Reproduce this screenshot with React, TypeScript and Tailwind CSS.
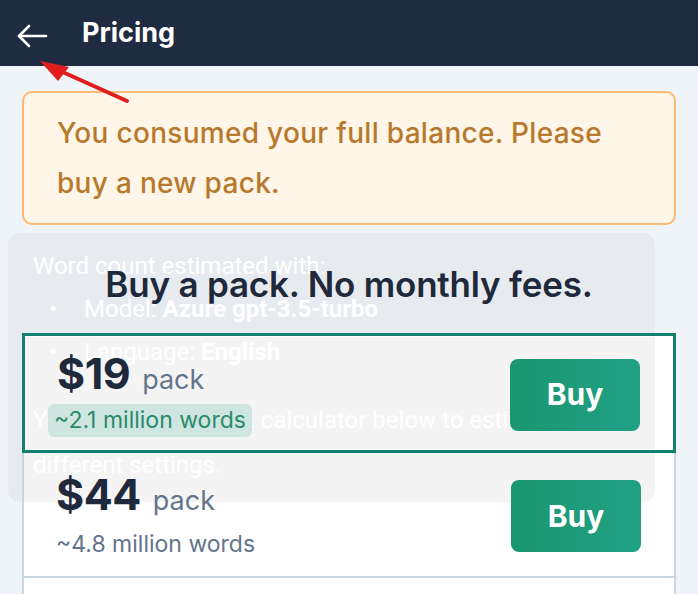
import React from 'react';

type Pack = {
  price: string;
  words: string;
  selected?: boolean;
};

const packs: Pack[] = [
  { price: '$19', words: '~2.1 million words', selected: true },
  { price: '$44', words: '~4.8 million words' },
  { price: '$99', words: '~11 million words' },
];

const BackArrow = () => (
  <svg width="32" height="24" viewBox="0 0 32 24" fill="none" className="mt-[5px]">
    <path d="M30 12H3" stroke="white" strokeWidth="2.6" strokeLinecap="round" />
    <path d="M13 2L3 12L13 22" stroke="white" strokeWidth="2.6" strokeLinecap="round" strokeLinejoin="round" />
  </svg>
);

// red annotation arrow pointing at the back button
const Annotation = () => (
  <svg className="absolute left-0 top-0 pointer-events-none z-30" width="140" height="110" viewBox="0 0 140 110">
    <path d="M127 101L56 69" stroke="#e11d1d" strokeWidth="4" strokeLinecap="round" />
    <path d="M40 61L69 67L58 81Z" fill="#e11d1d" />
  </svg>
);

const PackRow = ({ pack }: { pack: Pack }) => (
  <div
    className={`relative z-20 flex items-center justify-between pl-[32px] ${
      pack.selected
        ? 'h-[120px] -mx-[2px] border-[3px] border-[#11806e] pr-[33px] shadow-[inset_0_0_0_1px_white]'
        : 'h-[125px] border-b-2 border-[#cbd5e1] pr-[33px]'
    }`}
  >
    <div className="flex flex-col">
      <div className="flex items-baseline leading-[46px]">
        <span className="text-[43px] font-bold tracking-[-0.5px] text-[#1e293b]">{pack.price}</span>
        <span className="ml-[12px] text-[27px] text-[#64748b]">pack</span>
      </div>
      {pack.selected ? (
        <span className="mt-[1px] -ml-[9px] self-start rounded-[6px] bg-[#cfe6e0] px-[6px] text-[23px] leading-[33px] text-[#2b8a6c]">
          {pack.words}
        </span>
      ) : (
        <span className="mt-[5px] text-[23px] leading-[30px] text-[#64748b]">{pack.words}</span>
      )}
    </div>
    <button className="mt-[3px] h-[72px] w-[130px] rounded-[8px] bg-gradient-to-r from-[#1a976f] to-[#21a086] text-[30px] font-bold text-white">
      Buy
    </button>
  </div>
);

export default function App() {
  return (
    <div className="relative h-[594px] w-[698px] overflow-hidden bg-[#eff4f9] font-['Inter',sans-serif]">
      <header className="flex h-[66px] items-center bg-[#1f2b40] pl-[16px]">
        <BackArrow />
        <span className="ml-[34px] text-[27px] font-bold text-white">Pricing</span>
      </header>

      <main className="px-[22px] pt-[25px]">
        <div className="rounded-[10px] border-2 border-[#fdba74] bg-[#fff5e8] py-[15px] pl-[33px] pr-[30px] text-[28px] font-medium leading-[50px] tracking-[0.3px] text-[#b7792c]">
          You consumed your full balance. Please buy a new pack.
        </div>

        <h2 className="relative z-20 mt-[38px] text-center text-[35px] font-semibold leading-[42px] tracking-[-0.2px] text-[#1e293b]">
          Buy a pack. No monthly fees.
        </h2>

        <div className="mt-[28px] border-x-2 border-[#cbd5e1] bg-white">
          {packs.map((p) => (
            <PackRow key={p.price} pack={p} />
          ))}
        </div>
      </main>

      {/* tooltip over the list */}
      <div className="pointer-events-none absolute left-[8px] top-[233px] z-10 h-[269px] w-[647px] rounded-[12px] bg-[rgba(200,200,206,0.2)] pl-[25px] pr-[20px] pt-[12px] font-['Roboto',sans-serif] text-[24px] leading-[43px] text-white">
        <p>Word count estimated with:</p>
        <ul>
          <li className="flex">
            <span className="w-[51px] pl-[16px]">•</span>
            <span>
              Model: <b>Azure gpt-3.5-turbo</b>
            </span>
          </li>
          <li className="flex">
            <span className="w-[51px] pl-[16px]">•</span>
            <span>
              Language: <b>English</b>
            </span>
          </li>
        </ul>
        <p className="mt-[24px] leading-[45px]">
          You can use the cost calculator below to estimate different settings.
        </p>
      </div>

      <Annotation />
    </div>
  );
}
